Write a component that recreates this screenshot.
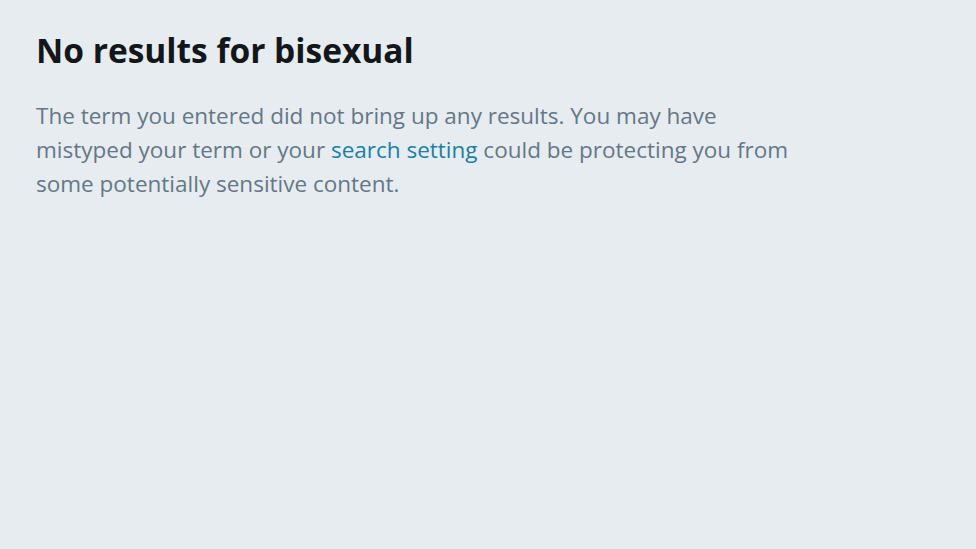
export default function App() {
  return (
    <div className="w-[976px] h-[549px] bg-[#e6ecf0] px-[36px] pt-[27px]" style={{ fontFamily: '"Open Sans", "Noto Sans", sans-serif' }}>
      <h1 className="text-[33.5px] leading-[46px] font-bold text-[#14171a]">No results for bisexual</h1>
      <p className="mt-[26px] text-[22.5px] leading-[34px] text-[#657786]">
        The term you entered did not bring up any results. You may have<br />
        mistyped your term or your <span className="text-[#1b7fa6]">search setting</span> could be protecting you from<br />
        some potentially sensitive content.
      </p>
    </div>
  );
}
